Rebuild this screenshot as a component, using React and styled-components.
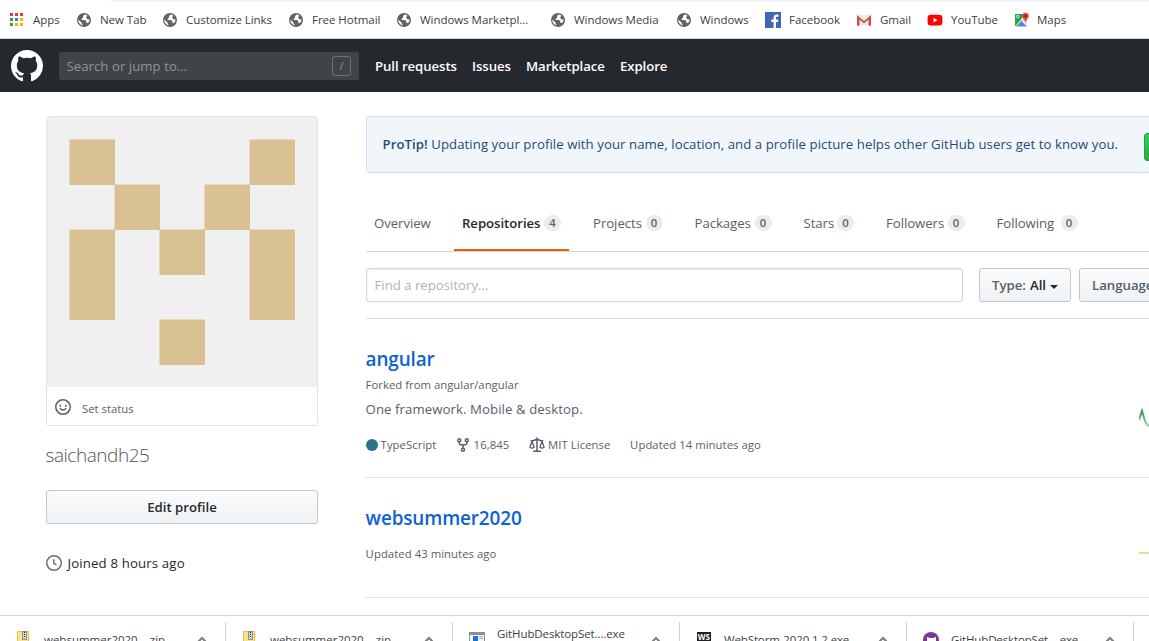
import React from "react";
import styled, { createGlobalStyle } from "styled-components";

const Global = createGlobalStyle`
  * { box-sizing: border-box; }
  html, body { margin: 0; padding: 0; overflow: hidden; }
  body {
    background: #fff;
    color: #24292e;
    font-family: "Open Sans", "Noto Sans", sans-serif;
    font-size: 13.2px;
    line-height: 20px;
  }
`;

const Page = styled.div`
  width: 1149px;
  height: 641px;
  overflow: hidden;
  display: flex;
  flex-direction: column;
`;

/* Bookmarks bar */
const Bookmarks = styled.div`
  flex: none;
  height: 39px;
  border-bottom: 1px solid #cfd3d6;
  display: flex;
  flex-direction: column;
`;
const OmniboxEdge = styled.div`
  height: 2px;
  margin-left: 110px;
  background: #f1f3f4;
  border-bottom-left-radius: 4px;
`;
const BookmarkList = styled.div`
  display: flex;
  padding: 8px 0 0 9px;
`;
const Bookmark = styled.div`
  flex: none;
  width: ${(p) => p.$width}px;
  height: 20px;
  display: flex;
  align-items: center;
  gap: 8px;
  color: #3c4043;
  font-size: 11.5px;
  letter-spacing: -0.04px;
  white-space: nowrap;
  svg { flex: none; }
`;

const AppsIcon = () => (
  <svg width="16" height="16" viewBox="0 0 16 16" shapeRendering="crispEdges">
    {["#e53935", "#e53935", "#e53935", "#2e9e57", "#1e88e5", "#f4b400", "#2e9e57", "#f4b400", "#f4b400"].map((c, i) => (
      <rect key={i} x={1 + (i % 3) * 5} y={1 + Math.floor(i / 3) * 5} width="3" height="3" fill={c} />
    ))}
  </svg>
);
const GlobeIcon = () => (
  <svg width="16" height="16" viewBox="0 0 16 16">
    <circle cx="8" cy="8" r="7" fill="#5f6368" />
    <path d="M8.6 2.4 7 4.2v1.5L5.3 7.2l.9.9h3l1.2 1.3v1.5l1.6.1c1-1 1.6-2.2 1.5-3.5l-2.3-.3-1-1.4.3-1.3 1.2-.6A6 6 0 0 0 8.6 2.4z" fill="#fff" />
    <path d="M2.300 7.400 5.700 10.800v1.300l1.500 1.400A5.800 5.800 0 0 1 2.300 7.400z" fill="#fff" />
  </svg>
);
const FacebookIcon = () => (
  <svg width="16" height="16" viewBox="0 0 16 16">
    <rect width="16" height="16" fill="#4267b2" />
    <path d="M11 16V9.900h2l.4-2.400H11V6c0-.8.4-1.200 1.300-1.200h1.200V2.600c-.4-.1-1-.2-1.700-.2-2 0-3.200 1.200-3.200 3.200v1.900H6.400v2.400h2.200V16z" fill="#fff" />
  </svg>
);
const GmailIcon = () => (
  <svg width="16" height="16" viewBox="0 0 16 16">
    <path d="M1 2.800h14v11H1z" fill="#eceff1" />
    <path d="M1 13.800V3L8 9l7-6v10.800h-2.500V7.600L8 11.400 3.500 7.600v6.200z" fill="#d54b3d" />
  </svg>
);
const YoutubeIcon = () => (
  <svg width="16" height="16" viewBox="0 0 16 16">
    <rect x="0.600" y="2.800" width="14.800" height="10.800" rx="3" fill="#f00" />
    <path d="M6.500 5.800v4.700l4-2.350z" fill="#fff" />
  </svg>
);
const MapsIcon = () => (
  <svg width="16" height="16" viewBox="-1 0 16 16">
    <path d="M1 2h10l-9 12H1z" fill="#1fa463" />
    <path d="m1 14 11-10.500 2 2L8 10l-6 5z" fill="#fdd663" />
    <path d="m2 14.500 5.500-5.500L13 14.500z" fill="#4a8af4" />
    <path d="m9 9 3-2 1 2v5z" fill="#dfe3e6" />
    <circle cx="3.700" cy="4.600" r="1.300" fill="none" stroke="#fff" strokeWidth=".8" />
    <path d="M11.500.700A3.300 3.300 0 0 0 8.200 4c0 2.200 2.400 3 3.100 6.500h.4c.7-3.500 3.100-4.300 3.100-6.500A3.300 3.300 0 0 0 11.500.700z" fill="#e24436" />
    <circle cx="11.500" cy="4" r="1.300" fill="#7d2018" />
  </svg>
);

const bookmarks = [
  ["Apps", 67, AppsIcon],
  ["New Tab", 86, GlobeIcon],
  ["Customize Links", 126, GlobeIcon],
  ["Free Hotmail", 108, GlobeIcon],
  ["Windows Marketpl...", 154, GlobeIcon],
  ["Windows Media", 126, GlobeIcon],
  ["Windows", 89, GlobeIcon],
  ["Facebook", 91, FacebookIcon],
  ["Gmail", 71, GmailIcon],
  ["YouTube", 86, YoutubeIcon],
  ["Maps", 60, MapsIcon],
];

/* Site header */
const Header = styled.header`
  flex: none;
  height: 53px;
  background: #24292e;
  display: flex;
  align-items: center;
  padding: 1px 11px 0;
  color: #fff;
`;
const Search = styled.div`
  width: 300px;
  height: 28px;
  margin: 0 16px;
  padding: 0 8px 0 7.500px;
  border-radius: 3px;
  background: #3f4448;
  color: #919497;
  display: flex;
  align-items: center;
  justify-content: space-between;
  letter-spacing: 0.040px;
`;
const SlashKey = styled.span`
  width: 19px;
  height: 20px;
  border: 1px solid #6b7075;
  border-radius: 3px;
  display: flex;
  align-items: center;
  justify-content: center;
  font-size: 11px;
`;
const NavLink = styled.a`
  width: ${(p) => p.$width}px;
  font-weight: 600;
  white-space: nowrap;
  letter-spacing: -0.070px;
`;
const GithubMark = () => (
  <svg width="32" height="32" viewBox="0 0 16 16" fill="#fff">
    <path fillRule="evenodd" d="M8 0C3.580 0 0 3.580 0 8c0 3.540 2.290 6.530 5.470 7.590.4.070.55-.17.55-.38 0-.19-.01-.82-.01-1.490-2.010.37-2.530-.49-2.690-.94-.09-.23-.48-.94-.82-1.130-.28-.15-.68-.52-.01-.53.63-.01 1.080.58 1.230.82.72 1.210 1.870.87 2.330.66.07-.52.28-.87.51-1.070-1.780-.2-3.640-.89-3.640-3.950 0-.87.31-1.590.82-2.150-.08-.2-.36-1.020.08-2.120 0 0 .67-.21 2.200.82.64-.18 1.320-.27 2-.27.68 0 1.360.09 2 .27 1.530-1.040 2.200-.82 2.200-.82.44 1.100.16 1.920.08 2.120.51.56.82 1.270.82 2.150 0 3.070-1.870 3.750-3.650 3.950.29.25.54.73.54 1.480 0 1.070-.01 1.930-.01 2.200 0 .21.15.46.55.38A8.013 8.013 0 0 0 16 8c0-4.420-3.580-8-8-8z" />
  </svg>
);

/* 16px line icons drawn in the current text colour */
const LineIcon = styled.svg.attrs({ width: 16, height: 16, viewBox: "0 0 16 16" })`
  flex: none;
  fill: none;
  stroke: currentColor;
  stroke-width: 1.5;
  stroke-linecap: round;
  stroke-linejoin: round;
`;
const SmileyIcon = () => (
  <LineIcon>
    <circle cx="8" cy="8" r="7.250" />
    <circle cx="5.200" cy="6.800" r="1" fill="currentColor" stroke="none" />
    <circle cx="10.800" cy="6.800" r="1" fill="currentColor" stroke="none" />
    <path d="M5.300 9.600c.6.900 1.600 1.500 2.700 1.500s2.100-.6 2.700-1.500" />
  </LineIcon>
);
const ClockIcon = () => (
  <LineIcon>
    <circle cx="8" cy="8" r="7.250" />
    <path d="M7.750 4.750v3.500l2.200 1.400" />
  </LineIcon>
);
const ForkIcon = () => (
  <LineIcon>
    <circle cx="4.250" cy="3.250" r="1.500" />
    <circle cx="11.750" cy="3.250" r="1.500" />
    <circle cx="8" cy="12.750" r="1.500" />
    <path d="M4.250 5v1.250A1.500 1.500 0 0 0 5.750 7.750h4.500a1.500 1.500 0 0 0 1.500-1.500V5M8 8v3" />
  </LineIcon>
);
const LawIcon = () => (
  <LineIcon>
    <path d="M8 .9v13.300M4.600 14.250h6.800M2.200 3.750h2L7 2.500h2l2.800 1.250h2" />
    <path d="M3 4.500.9 10.300c1.200 1 3 1 4.200 0L3 4.500zM13 4.500l-2.100 5.800c1.200 1 3 1 4.200 0L13 4.500z" strokeWidth="1.300" />
  </LineIcon>
);

/* Profile column */
const Body = styled.div`
  flex: 1;
  min-height: 0;
  display: flex;
  gap: 48px;
  padding: 24px 0 0 46px;
`;
const Sidebar = styled.aside`
  flex: none;
  width: 272px;
  display: flex;
  flex-direction: column;
`;
const AvatarCard = styled.div`
  border: 1px solid #e1e4e8;
  border-radius: 3px;
  overflow: hidden;
  svg { display: block; }
`;
const Status = styled.div`
  height: 38px;
  padding: 2px 8px 0;
  display: flex;
  align-items: center;
  gap: 11px;
  color: #586069;
  font-size: 11.3px;
`;
const StatusLabel = styled.span`
  padding-top: 3px;
`;
const Login = styled.h1`
  margin: 17px 0 0 -0.500px;
  font-size: 19px;
  line-height: 24px;
  font-weight: 300;
  letter-spacing: -0.450px;
  color: #555;
`;
const Button = styled.button`
  height: 34px;
  width: ${(p) => p.$width}px;
  flex: none;
  border: 1px solid #c3c6ca;
  border-radius: 3px;
  background: linear-gradient(#fafbfc, #eff3f6);
  color: ${(p) => (p.$muted ? "#586069" : "#24292e")};
  font: 600 13.2px/20px "Open Sans", sans-serif;
  padding: 0 12px;
  white-space: nowrap;
  display: flex;
  align-items: center;
  justify-content: ${(p) => (p.$muted ? "flex-start" : "center")};
  gap: 4px;
  b { color: #24292e; font-weight: 600; }
`;
const EditProfile = styled(Button)`
  margin-top: 23px;
`;
const Joined = styled.div`
  margin-top: 29px;
  display: flex;
  align-items: center;
  gap: 5.500px;
  letter-spacing: 0.160px;
  svg { color: #6a737d; }
`;

/* x, y and height of each filled block, in cells */
const blocks = [[0, 0, 1], [4, 0, 1], [1, 1, 1], [3, 1, 1], [0, 2, 2], [2, 2, 1], [4, 2, 2], [2, 4, 1]];
const Identicon = () => (
  <svg width="270" height="270" viewBox="0 0 270 270">
    <rect width="270" height="270" fill="#f0f0f0" />
    {blocks.map(([x, y, h]) => (
      <rect key={`${x}${y}`} x={22.5 + x * 45} y={22.5 + y * 45} width="45.500" height={h * 45 + 0.5} fill="#d9c194" />
    ))}
  </svg>
);

/* Main column */
const Main = styled.main`
  flex: none;
  width: 928px;
`;
const ProTip = styled.div`
  height: 57px;
  border: 1px solid #c8e1f8;
  border-radius: 3px;
  background: #f1f6fb;
  color: #264c72;
  padding: 16px 15.500px;
  display: flex;
  white-space: nowrap;
`;
const TipText = styled.div`
  width: 761.500px;
  line-height: 23px;
  letter-spacing: 0.063px;
  b { font-weight: 600; }
`;
const GreenButton = styled.div`
  width: 84px;
  height: 28px;
  border: 1px solid #279f43;
  border-radius: 3px;
  background: linear-gradient(#34d058, #28a745);
`;
const Tabs = styled.nav`
  margin-top: 22px;
  height: 57px;
  border-bottom: 1px solid #d1d5da;
  display: flex;
  align-items: stretch;
`;
const Tab = styled.a`
  flex: none;
  width: ${(p) => p.$width}px;
  margin-right: 16px;
  padding: 2px 8px 0;
  display: flex;
  align-items: center;
  justify-content: space-between;
  border-bottom: 2px solid ${(p) => (p.$active ? "#e36209" : "transparent")};
  color: ${(p) => (p.$active ? "#24292e" : "#586069")};
  font-weight: ${(p) => (p.$active ? 600 : 400)};
  letter-spacing: -0.050px;
`;
const Counter = styled.span`
  width: 17px;
  height: 16px;
  border-radius: 8px;
  background: #ececed;
  color: #586069;
  font-size: 11.3px;
  font-weight: 600;
  line-height: 16px;
  text-align: center;
  letter-spacing: 0;
`;
const Filters = styled.div`
  padding: 16px 0;
  border-bottom: 1px solid #d8dbdf;
  display: flex;
  gap: 8px;
`;
const FindBox = styled.div`
  width: 597px;
  height: 34px;
  margin-right: 8px;
  padding: 0 7.500px;
  border: 1px solid #d1d5da;
  border-radius: 3px;
  box-shadow: inset 0 1px 2px rgba(27, 31, 35, 0.075);
  color: #b0b4b8;
  line-height: 32px;
`;
const Caret = styled.span`
  border: 4px solid transparent;
  border-top-color: #24292e;
  border-bottom: 0;
  margin-top: 3px;
`;
const Repo = styled.article`
  height: ${(p) => p.$height}px;
  border-bottom: 1px solid #e1e4e8;
  display: flex;
  justify-content: space-between;
  padding: 25px 0 0;
`;
const RepoInfo = styled.div`
  margin-left: -0.400px;
  color: #586069;
`;
const RepoName = styled.h3`
  margin: 0;
  font-size: 18.9px;
  line-height: 30px;
  font-weight: 600;
  color: #0b61d6;
  letter-spacing: -0.120px;
`;
const Fork = styled.div`
  margin-top: 1px;
  font-size: 11.3px;
  letter-spacing: 0.030px;
`;
const Desc = styled.div`
  margin-top: 4px;
  letter-spacing: 0.080px;
`;
const Meta = styled.div`
  margin-top: ${(p) => p.$top}px;
  display: flex;
  align-items: center;
  font-size: 11.3px;
  letter-spacing: 0.060px;
  white-space: nowrap;
`;
const MetaItem = styled.span`
  width: ${(p) => p.$width}px;
  display: flex;
  align-items: center;
  gap: 3px;
`;
const Dot = styled.span`
  width: 12px;
  height: 12px;
  margin-top: -1px;
  border-radius: 50%;
  background: #2b7489;
`;
const Graph = styled.svg`
  width: 155px;
  height: 30px;
  margin-top: ${(p) => p.$top}px;
`;

/* Downloads shelf */
const Shelf = styled.footer`
  flex: none;
  height: 26px;
  border-top: 1px solid #d5d8da;
  background: #fff;
  display: flex;
  padding-top: 6px;
  overflow: hidden;
`;
const Download = styled.div`
  flex: none;
  width: ${(p) => p.$width}px;
  height: 36px;
  border-right: 1px solid #cfd1d4;
  padding: 0 18px 0 16px;
  display: flex;
  align-items: center;
  font-size: 11.5px;
  color: #3c4043;
  svg { flex: none; }
`;
const FileName = styled.span`
  flex: 1;
  margin-left: 12px;
  white-space: pre;
  padding-bottom: ${(p) => p.$lift || 0}px;
  letter-spacing: ${(p) => p.$track || 0}px;
`;
const ZipIcon = () => (
  <svg width="16" height="18" viewBox="0 0 16 18">
    <path d="M1.500.500h11v17h-11z" fill="#fbe38e" stroke="#e8c342" />
    <path d="M6.500.500h4v8h-4z" fill="#d5d5d5" stroke="#777" strokeWidth=".8" />
    <path d="M8.500 1v6" stroke="#222" strokeDasharray="1 1" />
  </svg>
);
const ExeIcon = () => (
  <svg width="16" height="16" viewBox="0 0 16 16">
    <path d="M.500.500h15v15H.500z" fill="#f7f7f7" stroke="#8b8f93" />
    <path d="M0 0h16v3H0z" fill="#8b8f93" />
    <path d="M4 4h5v6H4z" fill="#0a78d6" />
    <path d="M10 4.500h4M10 6.500h4" stroke="#9aa" />
  </svg>
);
const WebStormIcon = () => (
  <svg width="16" height="16" viewBox="0 0 16 16">
    <rect x="1" width="14" height="16" fill="#202124" />
    <text x="1.800" y="8" fontFamily="Open Sans" fontWeight="700" fontSize="8" fill="#fff">WS</text>
  </svg>
);
const DesktopIcon = () => (
  <svg width="16" height="16" viewBox="0 0 16 16">
    <circle cx="8" cy="8" r="8" fill="#80349a" />
    <path d="M4 5 7 6h3l3-1v5H4z" fill="#fff" />
  </svg>
);
const Chevron = () => (
  <svg width="10" height="10" viewBox="0 0 10 10">
    <path d="m1 7 4-4 4 4" fill="none" stroke="#7a7d81" strokeWidth="2" />
  </svg>
);

export default function App() {
  return (
    <Page>
      <Global />
      <Bookmarks>
        <OmniboxEdge />
        <BookmarkList>
          {bookmarks.map(([label, width, Icon]) => (
            <Bookmark key={label} $width={width}>
              <Icon />
              {label}
            </Bookmark>
          ))}
        </BookmarkList>
      </Bookmarks>
      <Header>
        <GithubMark />
        <Search>
          Search or jump to...
          <SlashKey>/</SlashKey>
        </Search>
        <NavLink $width={97}>Pull requests</NavLink>
        <NavLink $width={54}>Issues</NavLink>
        <NavLink $width={94}>Marketplace</NavLink>
        <NavLink $width={60}>Explore</NavLink>
      </Header>
      <Body>
        <Sidebar>
          <AvatarCard>
            <Identicon />
            <Status>
              <SmileyIcon />
              <StatusLabel>Set status</StatusLabel>
            </Status>
          </AvatarCard>
          <Login>saichandh25</Login>
          <EditProfile $width={272}>Edit profile</EditProfile>
          <Joined>
            <ClockIcon />
            Joined 8 hours ago
          </Joined>
        </Sidebar>
        <Main>
          <ProTip>
            <TipText>
              <b>ProTip!</b> Updating your profile with your name, location, and a profile picture helps other GitHub users get to know you.
            </TipText>
            <GreenButton />
          </ProTip>
          <Tabs>
            <Tab $width={72}>Overview</Tab>
            <Tab $width={115} $active>Repositories<Counter>4</Counter></Tab>
            <Tab $width={85.5}>Projects<Counter>0</Counter></Tab>
            <Tab $width={93}>Packages<Counter>0</Counter></Tab>
            <Tab $width={66.5}>Stars<Counter>0</Counter></Tab>
            <Tab $width={94.5}>Followers<Counter>0</Counter></Tab>
            <Tab $width={97}>Following<Counter>0</Counter></Tab>
          </Tabs>
          <Filters>
            <FindBox>Find a repository...</FindBox>
            <Button $width={92} $muted>Type: <b>All</b><Caret /></Button>
            <Button $width={125} $muted>Language: <b>All</b><Caret /></Button>
          </Filters>
          <Repo $height={159}>
            <RepoInfo>
              <RepoName>angular</RepoName>
              <Fork>Forked from angular/angular</Fork>
              <Desc>One framework. Mobile &amp; desktop.</Desc>
              <Meta $top={16}>
                <MetaItem $width={89}><Dot />TypeScript</MetaItem>
                <MetaItem $width={74.5}><ForkIcon />16,845</MetaItem>
                <MetaItem $width={101}><LawIcon />MIT License</MetaItem>
                <MetaItem>Updated 14 minutes ago</MetaItem>
              </Meta>
            </RepoInfo>
            <Graph $top={64} viewBox="0 0 155 30">
              <defs>
                <linearGradient id="activity" x1="0" y1="0" x2="0" y2="1">
                  <stop offset="0" stopColor="#3d8f55" />
                  <stop offset="1" stopColor="#8cd88a" />
                </linearGradient>
              </defs>
              <path d="M0 12 3 3 6 13Q8 18 11 18" fill="none" stroke="url(#activity)" strokeWidth="2" />
            </Graph>
          </Repo>
          <Repo $height={120}>
            <RepoInfo>
              <RepoName>websummer2020</RepoName>
              <Meta $top={11}>Updated 43 minutes ago</Meta>
            </RepoInfo>
            <Graph $top={35} viewBox="0 0 155 30">
              <path d="M0 15H155" stroke="#d0e89a" strokeWidth="2" />
            </Graph>
          </Repo>
        </Main>
      </Body>
      <Shelf>
        <Download $width={226}><ZipIcon /><FileName>websummer2020....zip</FileName><Chevron /></Download>
        <Download $width={227}><ZipIcon /><FileName>websummer2020....zip</FileName><Chevron /></Download>
        <Download $width={227}><ExeIcon /><FileName $lift={12} $track={-0.1}>GitHubDesktopSet....exe</FileName><Chevron /></Download>
        <Download $width={227}><WebStormIcon /><FileName $track={-0.13}>WebStorm-2020.1.2.exe</FileName><Chevron /></Download>
        <Download $width={227}><DesktopIcon /><FileName $track={-0.13}>GitHubDesktopSet....exe</FileName><Chevron /></Download>
      </Shelf>
    </Page>
  );
}
